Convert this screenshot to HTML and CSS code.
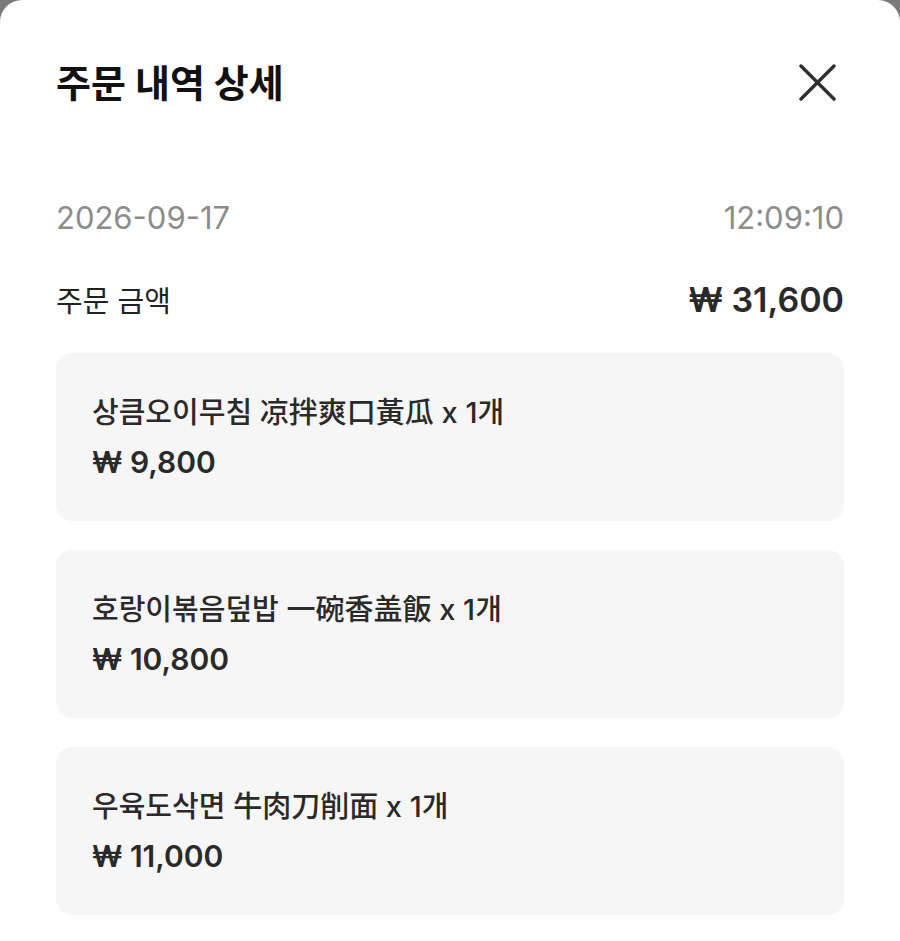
FILE: index.html
```html
<!DOCTYPE html>
<html lang="ko">
<head>
<meta charset="utf-8">
<title>주문 내역 상세</title>
<link rel="stylesheet" href="styles.css">
</head>
<body>
<div class="sheet">
  <div class="header">
    <h1 class="title">주문 내역 상세</h1>
    <button class="close" aria-label="닫기">
      <svg width="40" height="40" viewBox="0 0 40 40"><path d="M5 3 L38 36 M38 3 L5 36" stroke="#2f2f2f" stroke-width="3.4" stroke-linecap="round" fill="none"/></svg>
    </button>
  </div>
  <div class="meta">
    <span>2026-09-17</span>
    <span>12:09:10</span>
  </div>
  <div class="total">
    <span class="total-label">주문 금액</span>
    <span class="total-value">₩ 31,600</span>
  </div>
  <div class="items">
    <div class="item">
      <div class="item-name">상큼오이무침 凉拌爽口黃瓜 x 1개</div>
      <div class="item-price">₩ 9,800</div>
    </div>
    <div class="item">
      <div class="item-name">호랑이볶음덮밥 一碗香盖飯 x 1개</div>
      <div class="item-price">₩ 10,800</div>
    </div>
    <div class="item">
      <div class="item-name">우육도삭면 牛肉刀削面 x 1개</div>
      <div class="item-price">₩ 11,000</div>
    </div>
  </div>
</div>
</body>
</html>
```
FILE: styles.css
```css
html, body {
  margin: 0;
  padding: 0;
  background: #7a7a7a;
  height: 100%;
  overflow: hidden;
}
body {
  font-family: Inter, "Noto Sans CJK KR", sans-serif;
  color: #222;
}
.sheet {
  background: #fff;
  border-radius: 22px 22px 0 0;
  min-height: 941px;
  padding: 59px 56px 0 56px;
  box-sizing: border-box;
}
.header {
  display: flex;
  align-items: center;
  justify-content: space-between;
  height: 48px;
}
.title {
  margin: 0;
  font-size: 38px;
  font-weight: 700;
  line-height: 48px;
  color: #111;
}
.close {
  border: 0;
  background: none;
  padding: 0;
  margin-right: 8px;
  display: flex;
}
.meta {
  display: flex;
  justify-content: space-between;
  margin-top: 91px;
  line-height: 40px;
  font-size: 31px;
  color: #8c8c8c;
}
.total {
  display: flex;
  justify-content: space-between;
  align-items: baseline;
  margin-top: 40px;
}
.total-label {
  font-size: 29px;
  line-height: 44px;
  color: #222;
}
.total-value {
  font-size: 34px;
  font-weight: 600;
  line-height: 44px;
  color: #2a2a2a;
}
.items {
  display: flex;
  flex-direction: column;
  gap: 29px;
  margin-top: 29px;
}
.item {
  background: #f6f6f6;
  border-radius: 16px;
  padding: 36px 36px 34px 36px;
}
.item-name {
  font-size: 29px;
  font-weight: 500;
  line-height: 48px;
  color: #2a2a2a;
}
.item-price {
  font-size: 30px;
  font-weight: 600;
  line-height: 50px;
  color: #2a2a2a;
}
```
